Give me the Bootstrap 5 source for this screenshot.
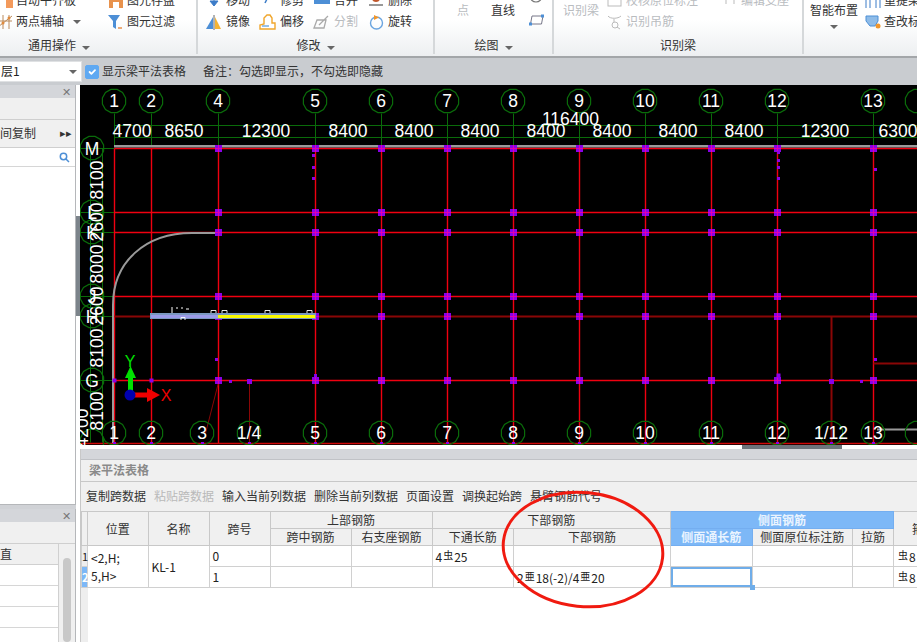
<!DOCTYPE html>
<html lang="zh">
<head>
<meta charset="utf-8">
<title>梁平法表格</title>
<link href="https://cdn.jsdelivr.net/npm/bootstrap@5.3.0/dist/css/bootstrap.min.css" rel="stylesheet">
<style>
html,body{height:100%;overflow:hidden}
body{font:12px/1.2 "Noto Sans CJK SC","Liberation Sans",sans-serif;color:#333;background:#f0f0f0}
.app-shell{width:917px;height:642px;position:relative}
.rb-bar{height:58px;background:linear-gradient(#fff 0,#fff 20px,#edeff1 100%);border-bottom:2px solid #a3a6a9;flex:none}
.rb-group{border-right:2px solid #d5d8da;height:54px;flex:none}
.rb-g1{width:198px}.rb-g2{width:237px}.rb-g3{width:119px}.rb-g4{width:250px}.rb-g5{flex:1 1 auto;border-right:0}
.rb-body{height:36px;overflow:hidden}
.rb-label{height:17px;line-height:17px;color:#333}
.rb-col{margin-top:-10px;flex:none}
.rb-item{height:21px;white-space:nowrap;gap:3px}
.rb-item svg{flex:none}
.rb-off{color:#b9bcbf}
.caret-dn{display:inline-block;width:0;height:0;border:4px solid transparent;border-top-color:#666;border-bottom:0;margin-left:6px}
.w108{width:108px}.w54{width:54px}
.rb-pl-28{padding-left:28px}.rb-pl-7{padding-left:7px}.rb-pl-9{padding-left:9px}.rb-pl-6{padding-left:6px}.rb-pl-22{padding-left:22px}
.rb-pt-3{padding-top:3px}
.rb-ml-7{margin-left:7px}
.rb-ws{white-space:nowrap}
.opt-bar{height:27px;background:#c9ccd0;flex:none;gap:3px}
.combo-box{width:82px;height:21px;background:#fff;border:1px solid #dfe1e3;border-left:0;padding-left:1px;color:#222}
.form-check-input.tick-box{width:14px;height:14px;margin:0;background-color:#5fa9f2;border-color:#5fa9f2;border-radius:2px;opacity:1}
.opt-note{margin-left:14px}
.side-col{width:76px;flex:none;background:#d0d2d6}
.side-panel{background:#fff;border-right:1px solid #b5b7ba;border-bottom:1px solid #b5b7ba;overflow:hidden}
.sp-one{height:420px;flex:none}
.sp-two{flex:1 1 auto;min-height:0;margin-top:4px;border-bottom:0}
.sp-head{height:13px;background:#d4d6da;color:#777;font-size:11px;line-height:12px;text-align:right;padding-right:4px;flex:none}
.sp-tool{height:22px;background:#f0f0f0;border-bottom:1px solid #cfcfcf;flex:none}
.sp-copy{height:28px;background:#f0f0f0;border-bottom:1px solid #cfcfcf;padding-right:3px;margin-top:0;font-size:12px;flex:none}
.sp-search{height:19px;border-bottom:1px solid #d6d6d6;padding-right:5px;flex:none}
.sp-grid{flex:1 1 auto;min-height:0;overflow:hidden}
.sp-cells{width:59px;border-right:1px solid #d0d0d0}
.sp-cellh{height:21px;background:#f0f0f0;border-bottom:1px solid #d0d0d0;padding-left:0}
.sp-cell{height:21px;border-bottom:1px solid #d6d6d6}
.sp-scroll{width:16px;background:#f0f0f0;padding:14px 4px 0}
.sp-thumb{height:100%;background:#c8c8c8;border-radius:4px}
.split-rail{width:4px;flex:none;background:#fff;padding-top:131px}
.split-tab{height:100px;background:#7c848b}
.work-col{min-width:0;flex:1 1 auto;position:relative}
.cad-view{display:block;width:837px;height:360px;background:#000;flex:none}
.cad-view text{font-family:"Liberation Sans",sans-serif;fill:#fff;font-size:17.5px;text-anchor:middle}
.cad-gap{height:4px;background:#fff;flex:none}
.cad-handle{width:100px;height:4px;background:#6d757c;margin-left:662px}
.beam-panel{flex:1 1 auto;min-height:0;background:#fff;border-left:1px solid #c8c8c8;overflow:hidden}
.bp-head{height:11px;background:#d4d6da;border-bottom:1px solid #c0c2c6;flex:none}
.bp-title{height:22px;background:#f0f0f0;border-bottom:1px solid #c8c8c8;color:#8a8a8a;font-weight:700;padding-left:8px;flex:none}
.bp-tools{height:29px;background:#f0f0f0;padding-left:5px;gap:8px;flex:none;white-space:nowrap;color:#333}
.bp-off{color:#b9b9b9}
.bp-body{flex:1 1 auto;min-height:0;background:linear-gradient(90deg,#eee 7px,#fff 7px);overflow:hidden}
.table.beam-grid{table-layout:fixed;width:812.500px;margin:0;border-collapse:collapse;border-color:#d0d0d0;color:#333}
.table.beam-grid>:not(caption)>*>*{padding:0;border:1px solid #d0d0d0;background:transparent;box-shadow:none;color:inherit;line-height:1;vertical-align:middle}
.table.beam-grid>thead>tr>th{background:#f0f0f0;font-weight:400;text-align:center;height:17px;border-color:#c8c8c8}
.table.beam-grid>tbody>tr>td{height:21px;padding-left:3px;color:#222;white-space:nowrap;background:#fff}
.table.beam-grid>tbody>tr>td.row-no{padding:0;background:#eee;text-align:center;font-size:11px}
.table.beam-grid>tbody>tr>td.row-on{background:#7db8f7;color:#fff;font-weight:700}
.table.beam-grid>tbody>tr>td.cell-loc{line-height:18px;padding-left:3px;white-space:normal;word-break:break-all}
.table.beam-grid>thead>tr>th.hl-head{background:#7db8f7;color:#eaf4ff;font-weight:700;border-color:#74aef0}
.table.beam-grid>tbody>tr>td.cell-cur{box-shadow:inset 0 0 0 2px #6fade9;position:relative}
.cur-dot{position:absolute;right:-3px;bottom:-3px;width:5px;height:5px;background:#6fade9}
.steel-mark{font-size:10px;vertical-align:3px;line-height:1;padding:0 1px}
.note-ring{position:absolute;left:500px;top:488px;pointer-events:none}
.col-rh{width:6px}.col-a{width:60.500px}.col-b{width:61px}.col-c{width:61px}.col-d{width:81px}.col-e{width:81px}.col-f{width:81.500px}.col-g{width:157px}.col-h{width:81.500px}.col-i{width:100.500px}.col-j{width:41px}.col-k{width:61px}
</style>
</head>
<body>
<div class="app-shell d-flex flex-column overflow-hidden">

  <div class="rb-bar d-flex">
    <div class="rb-group rb-g1">
      <div class="rb-body d-flex">
        <div class="rb-col w108">
          <div class="rb-item d-flex align-items-center"><svg width="13" height="16" viewBox="0 0 13 16"><rect x="6" y="5" width="7" height="10" fill="#f39a5c"/></svg>自动平齐板</div>
          <div class="rb-item d-flex align-items-center"><svg width="13" height="16" viewBox="0 0 13 16"><path d="M-2 13 12 2M3 1v14M-2 7h14M9 1v14" stroke="#b98a5c" stroke-width="1" fill="none"/><circle cx="3" cy="9" r="1.500" fill="#e08a3c"/><circle cx="9" cy="4" r="1.500" fill="#e08a3c"/></svg>两点辅轴<span class="caret-dn"></span></div>
        </div>
        <div class="rb-col">
          <div class="rb-item d-flex align-items-center"><svg width="16" height="16" viewBox="0 0 16 16"><rect x="1" y="1" width="14" height="14" fill="#e8924d"/><rect x="5" y="9" width="6" height="6" fill="#fff"/></svg>图元存盘</div>
          <div class="rb-item d-flex align-items-center"><svg width="16" height="16" viewBox="0 0 16 16"><path d="M0 1h12L8 7v8L5 13V7z" fill="#4d8fd6"/><path d="M10 14h4" stroke="#e8924d" stroke-width="1.500"/></svg>图元过滤</div>
        </div>
      </div>
      <div class="rb-label rb-pl-28">通用操作<span class="caret-dn"></span></div>
    </div>

    <div class="rb-group rb-g2">
      <div class="rb-body d-flex rb-pl-7">
        <div class="rb-col w54">
          <div class="rb-item d-flex align-items-center"><svg width="18" height="16" viewBox="0 0 18 16"><path d="M9 0v10M5 8l4 5 4-5z" fill="#3c7cc8" stroke="#3c7cc8"/></svg>移动</div>
          <div class="rb-item d-flex align-items-center"><svg width="18" height="16" viewBox="0 0 18 16"><path d="M1 15 8 3v12z" fill="#4d8fd6"/><path d="M10 3l6 12H10z" fill="#f5b433"/><path d="M9 1v15" stroke="#666"/></svg>镜像</div>
        </div>
        <div class="rb-col w54">
          <div class="rb-item d-flex align-items-center"><svg width="18" height="16" viewBox="0 0 18 16"><path d="M9 4 6 10" stroke="#3c7cc8" stroke-width="1.500"/></svg>修剪</div>
          <div class="rb-item d-flex align-items-center"><svg width="18" height="16" viewBox="0 0 18 16"><path d="M1 15v-4l4-1V4l3-3h3l2 3v5h3v6z" fill="#fff" stroke="#f0a62c" stroke-width="1.400"/><path d="M3 12h7" stroke="#6ba5e0" stroke-width="1.400"/></svg>偏移</div>
        </div>
        <div class="rb-col w54">
          <div class="rb-item d-flex align-items-center"><svg width="18" height="16" viewBox="0 0 18 16"><rect x="1" y="2" width="16" height="9" fill="#4d8fd6"/></svg>合并</div>
          <div class="rb-item d-flex align-items-center rb-off"><svg width="18" height="16" viewBox="0 0 18 16"><path d="M1 14 4 6h9l-2 8zM6 11 15 2" stroke="#aaa" stroke-width="1.300" fill="none"/></svg>分割</div>
        </div>
        <div class="rb-col">
          <div class="rb-item d-flex align-items-center"><svg width="18" height="16" viewBox="0 0 18 16"><circle cx="9" cy="5" r="4" fill="#c0562a"/><path d="M2 12h14" stroke="#333"/></svg>删除</div>
          <div class="rb-item d-flex align-items-center"><svg width="18" height="16" viewBox="0 0 18 16"><circle cx="9.500" cy="9" r="6" fill="none" stroke="#6ba5e0" stroke-width="1.400"/><path d="M7 1l5 2.500L7 6z" fill="#f0962c"/></svg>旋转</div>
        </div>
      </div>
      <div class="rb-label text-center">修改<span class="caret-dn"></span></div>
    </div>

    <div class="rb-group rb-g3">
      <div class="rb-body d-flex">
        <div class="rb-off rb-pl-22 rb-pt-3">点</div>
        <div class="rb-pl-22 rb-pt-3">直线</div>
        <svg class="ms-auto me-2" width="16" height="30" viewBox="0 0 16 30"><circle cx="8" cy="-4" r="6" fill="none" stroke="#777" stroke-width="1.200"/><path d="M2.500 24 4 16H15L13.500 24z" fill="#fff" stroke="#778"/><rect x="1" y="22.500" width="3" height="3" fill="#4d8fd6"/><rect x="13" y="14.500" width="3" height="3" fill="#4d8fd6"/></svg>
      </div>
      <div class="rb-label text-center">绘图<span class="caret-dn"></span></div>
    </div>

    <div class="rb-group rb-g4">
      <div class="rb-body d-flex rb-off">
        <div class="rb-pl-9 rb-pt-3 flex-none">识别梁</div>
        <div class="rb-col ms-2">
          <div class="rb-item d-flex align-items-center"><svg width="16" height="16" viewBox="0 0 16 16"><rect x="1" y="3" width="13" height="10" fill="none" stroke="#bbb"/></svg>校核原位标注</div>
          <div class="rb-item d-flex align-items-center"><svg width="16" height="16" viewBox="0 0 16 16"><path d="M1 2c2 3 10 3 13 0M7 5v3" stroke="#bbb" fill="none"/><circle cx="8" cy="11" r="3" fill="none" stroke="#bbb"/><path d="M10 13l3 2" stroke="#bbb"/></svg>识别吊筋</div>
        </div>
        <div class="rb-col ms-4">
          <div class="rb-item d-flex align-items-center"><svg width="16" height="16" viewBox="0 0 16 16"><path d="M1 6h14M4 6v5M12 6v5" stroke="#bbb" fill="none"/></svg>编辑支座</div>
        </div>
      </div>
      <div class="rb-label text-center">识别梁</div>
    </div>

    <div class="rb-group rb-g5 d-flex">
      <div class="rb-body text-center rb-pt-3 flex-none rb-pl-6 rb-ws">智能布置<span class="d-block"><span class="caret-dn m-0"></span></span></div>
      <div class="rb-body rb-ml-7">
        <div class="rb-col">
          <div class="rb-item d-flex align-items-center"><svg width="16" height="16" viewBox="0 0 16 16"><path d="M1 15V6h14v9M5 6v9M11 6v9" stroke="#3c7cc8" fill="none"/></svg>重提梁跨</div>
          <div class="rb-item d-flex align-items-center"><svg width="16" height="16" viewBox="0 0 16 16"><path d="M1 2h12v5l-3 5H5L1 7z" fill="#8fbce8" stroke="#4d8fd6"/><circle cx="13" cy="12" r="2.500" fill="#f0962c"/></svg>查改标注</div>
        </div>
      </div>
    </div>
  </div>

  <div class="opt-bar d-flex align-items-center">
    <div class="combo-box d-flex align-items-center justify-content-between pe-1">层1<span class="caret-dn"></span></div>
    <input class="form-check-input tick-box" type="checkbox" checked aria-label="显示梁平法表格">
    <span>显示梁平法表格</span>
    <span class="opt-note">备注：勾选即显示，不勾选即隐藏</span>
  </div>

  <div class="d-flex flex-grow-1 overflow-hidden">
    <div class="side-col d-flex flex-column">
      <div class="side-panel sp-one d-flex flex-column">
        <div class="sp-head">✕</div>
        <div class="sp-tool"></div>
        <div class="sp-copy d-flex align-items-center justify-content-between">间复制<span class="small">▸▸</span></div>
        <div class="sp-search d-flex align-items-center justify-content-end"><svg width="11" height="11" viewBox="0 0 11 11"><circle cx="4.500" cy="4.500" r="3.200" fill="none" stroke="#4d8fd6" stroke-width="1.500"/><path d="M7 7l3 3" stroke="#4d8fd6" stroke-width="1.500"/></svg></div>
      </div>
      <div class="side-panel sp-two d-flex flex-column">
        <div class="sp-head">✕</div>
        <div class="sp-tool"></div>
        <div class="sp-grid d-flex">
          <div class="sp-cells">
            <div class="sp-cellh d-flex align-items-center">直</div>
            <div class="sp-cell"></div><div class="sp-cell"></div><div class="sp-cell"></div><div class="sp-cell"></div>
          </div>
          <div class="sp-scroll flex-grow-1"><div class="sp-thumb"></div></div>
        </div>
      </div>
    </div>
    <div class="split-rail"><div class="split-tab"></div></div>

    <div class="work-col d-flex flex-column">
      <svg id="cad" class="cad-view" viewBox="80 85 837 360" role="img" aria-label="轴网图"></svg>
      <div class="cad-gap"><div class="cad-handle"></div></div>
      <div class="beam-panel d-flex flex-column">
        <div class="bp-head"></div>
        <div class="bp-title d-flex align-items-center">梁平法表格</div>
        <div class="bp-tools d-flex align-items-center">
          <span>复制跨数据</span><span class="bp-off">粘贴跨数据</span><span>输入当前列数据</span><span>删除当前列数据</span><span>页面设置</span><span>调换起始跨</span><span>悬臂钢筋代号</span>
        </div>
        <div class="bp-body">
          <table class="table beam-grid">
            <colgroup><col class="col-rh"><col class="col-a"><col class="col-b"><col class="col-c"><col class="col-d"><col class="col-e"><col class="col-f"><col class="col-g"><col class="col-h"><col class="col-i"><col class="col-j"><col class="col-k"></colgroup>
            <thead>
              <tr><th rowspan="2"></th><th rowspan="2">位置</th><th rowspan="2">名称</th><th rowspan="2">跨号</th><th colspan="2">上部钢筋</th><th colspan="2">下部钢筋</th><th colspan="3" class="hl-head">侧面钢筋</th><th rowspan="2">箍筋</th></tr>
              <tr><th>跨中钢筋</th><th>右支座钢筋</th><th>下通长筋</th><th>下部钢筋</th><th class="hl-head">侧面通长筋</th><th>侧面原位标注筋</th><th>拉筋</th></tr>
            </thead>
            <tbody>
              <tr><td class="row-no">1</td><td rowspan="2" class="cell-loc">&lt;2,H;<br>5,H&gt;</td><td rowspan="2">KL-1</td><td>0</td><td></td><td></td><td>4<span class="steel-mark">虫</span>25</td><td></td><td></td><td></td><td></td><td><span class="steel-mark">虫</span>8</td></tr>
              <tr><td class="row-no row-on">2</td><td>1</td><td></td><td></td><td></td><td>2<span class="steel-mark">亜</span>18(-2)/4<span class="steel-mark">亜</span>20</td><td class="cell-cur"><span class="cur-dot"></span></td><td></td><td></td><td><span class="steel-mark">虫</span>8</td></tr>
            </tbody>
          </table>
        </div>
      </div>
    </div>
  </div>

  <svg class="note-ring" width="168" height="124" viewBox="500 488 168 124" aria-hidden="true"><ellipse cx="583" cy="549.500" rx="80" ry="57" transform="rotate(6 583 549.500)" fill="none" stroke="#f01a10" stroke-width="3"/></svg>
</div>

<script>
(function(){
  var X=[114,151,218,315,381,447,513,579,645,711,777,873];
  var Y=[148,212,232,296,316,380];
  var GREEN='#0a6b0a',RED='#f00010',DARK='#8a0606',PUR='#8a00e8';
  var s='';
  function line(a,b,c,d,col,w){s+='<line x1="'+(a+.5)+'" y1="'+(b+.5)+'" x2="'+(c+.5)+'" y2="'+(d+.5)+'" stroke="'+col+'" stroke-width="'+(w||1)+'"/>';}
  function oct(x,y){var p=[];for(var i=0;i<12;i++){var t=Math.PI*(i+.5)/6;p.push((x+12*Math.cos(t)).toFixed(1)+','+(y+12*Math.sin(t)).toFixed(1));}s+='<polygon points="'+p.join(' ')+'" fill="none" stroke="'+GREEN+'" stroke-width="1.200"/>';}
  function txt(x,y,t){s+='<text x="'+x+'" y="'+y+'">'+t+'</text>';}
  function rot(x,y,t){s+='<text transform="translate('+x+' '+y+') rotate(-90)">'+t+'</text>';}
  function sq(x,y,n){s+='<rect x="'+(x+.5-n/2)+'" y="'+(y+.5-n/2)+'" width="'+n+'" height="'+n+'" fill="'+PUR+'"/>';
    if(n>=6){s+='<rect x="'+x+'" y="'+(y+.5-n/2)+'" width="1" height="'+n+'" fill="#e000b0"/><rect x="'+(x+.5-n/2)+'" y="'+y+'" width="'+n+'" height="1" fill="#e000b0"/>';}}

  /* green dimension lines */
  line(114,125,917,125,GREEN);line(114,137,917,137,GREEN);
  line(90,148,90,442,GREEN);line(102,148,102,442,GREEN);
  X.forEach(function(x){line(x,113,x,146,GREEN);});
  Y.forEach(function(y){line(80,y,114,y,GREEN);});

  /* axes */
  X.forEach(function(x){line(x,148,x,443,RED,1.400);});
  [212,232,296,380].forEach(function(y){line(114,y,917,y,RED,1.400);});
  line(114,316,917,316,DARK,2);
  line(114,148,917,148,RED,1.400);
  line(80,443,917,443,'#d00808',1.400);
  line(249,380,249,443,DARK);line(831,316,831,443,DARK,2);line(218,382,205,433,DARK);
  line(873,363,917,363,DARK,2);
  s+='<rect x="114" y="145" width="803" height="2.500" fill="#9a9a9a"/>';
  s+='<rect x="877" y="428.500" width="40" height="2" fill="#999"/>';

  /* curved beam */
  s+='<path d="M218 233H192C145 233 113 262 113 305V443" fill="none" stroke="#9a9a9a" stroke-width="2"/>';

  /* columns */
  Y.forEach(function(y){X.slice(2).forEach(function(x){sq(x,y,7);});});
  sq(114,380,4);sq(151,380,4);
  [114,151,202,249,315,381,447,513,579,645,711,777,831,873].forEach(function(x){sq(x,443,3);});
  [[313,155],[313,167],[313,178],[778,152],[778,160],[778,167],[778,178],[875,169],[216,359],[230,381],[249,381,5],[831,381,5],[861,381,3],[778,375,4],[875,359,3],[315,375,3]].forEach(function(p){sq(p[0],p[1],p[2]||3);});

  /* selected beam */
  s+='<rect x="150" y="313" width="166" height="6" fill="#7a98c0"/>';
  s+='<rect x="151" y="315" width="67" height="3" fill="#9a9ae8"/>';
  s+='<rect x="218" y="315" width="97" height="3" fill="#f8f800"/>';
  s+='<path d="M181 320v-2.500h4v2.500M211 313v-2.500h5v2.500M222 313v-2.500h5v2.500M265 313v-2.500h5v2.500M307 313v-2.500h5v2.500" fill="none" stroke="#fff" stroke-width=".9"/>';
  s+='<path d="M172 307v6M176 308h2M181 308h2M186 309h3" stroke="#fff" fill="none"/>';

  /* top bubbles */
  var topN=['1','2','4','5','6','7','8','9','10','11','12','13'];
  X.forEach(function(x,i){oct(x,101);txt(x,107,topN[i]);});
  oct(917,101);
  [[132,'4700'],[184,'8650'],[266,'12300'],[348,'8400'],[414,'8400'],[480,'8400'],[546,'8400'],[612,'8400'],[678,'8400'],[744,'8400'],[825,'12300'],[898,'6300']].forEach(function(d){txt(d[0],137,d[1]);});
  txt(570.500,125,'116400');

  /* left bubbles */
  [[148,'M'],[212,'L'],[232,'K'],[296,'J'],[316,'H'],[380,'G']].forEach(function(b){oct(92,b[0]);txt(92,b[0]+6.500,b[1]);});
  oct(92,441);
  [[180,'8100'],[222,'2600'],[264,'8000'],[306,'2600'],[348,'8100'],[411,'8100']].forEach(function(d){rot(103,d[0],d[1]);});
  rot(88,428,'4200');

  /* bottom bubbles */
  [[114,'1'],[151,'2'],[202,'3'],[249,'1/4'],[315,'5'],[381,'6'],[447,'7'],[513,'8'],[579,'9'],[645,'10'],[711,'11'],[777,'12'],[831,'1/12'],[873,'13']].forEach(function(b){oct(b[0],433);txt(b[0],439,b[1]);});
  oct(917,433);

  /* coordinate gizmo */
  s+='<rect x="128" y="377" width="5" height="18" fill="#00e000"/><path d="M125 378 130.500 366 136 378z" fill="#00e000"/>';
  s+='<rect x="130" y="392.500" width="20" height="5" fill="#f00000"/><path d="M147 388 160 395 147 402z" fill="#f00000"/>';
  s+='<circle cx="130" cy="395" r="5.500" fill="#0000b0"/>';
  s+='<text x="130" y="367" style="fill:#00e000;font-size:16px">Y</text><text x="166" y="401" style="fill:#f00000;font-size:16px">X</text>';

  document.getElementById('cad').innerHTML=s;
})();
</script>
<script src="https://cdn.jsdelivr.net/npm/bootstrap@5.3.0/dist/js/bootstrap.bundle.min.js"></script>
</body>
</html>
